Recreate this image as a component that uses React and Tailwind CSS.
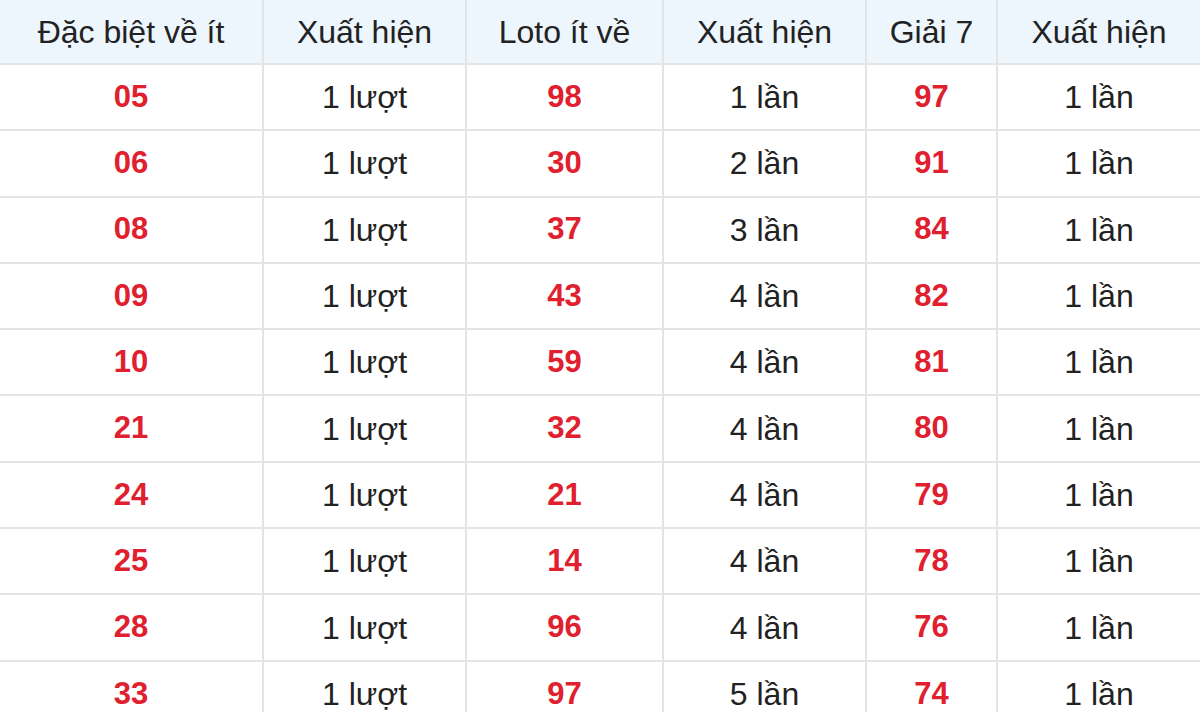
import React from "react";

const rows = [
  ["05", "1 lượt", "98", "1 lần", "97", "1 lần"],
  ["06", "1 lượt", "30", "2 lần", "91", "1 lần"],
  ["08", "1 lượt", "37", "3 lần", "84", "1 lần"],
  ["09", "1 lượt", "43", "4 lần", "82", "1 lần"],
  ["10", "1 lượt", "59", "4 lần", "81", "1 lần"],
  ["21", "1 lượt", "32", "4 lần", "80", "1 lần"],
  ["24", "1 lượt", "21", "4 lần", "79", "1 lần"],
  ["25", "1 lượt", "14", "4 lần", "78", "1 lần"],
  ["28", "1 lượt", "96", "4 lần", "76", "1 lần"],
  ["33", "1 lượt", "97", "5 lần", "74", "1 lần"],
];

const headers = ["Đặc biệt về ít", "Xuất hiện", "Loto ít về", "Xuất hiện", "Giải 7", "Xuất hiện"];
const widths = ["w-[263px]", "w-[203px]", "w-[197px]", "w-[203px]", "w-[131px]", "w-[203px]"];

export default function App() {
  return (
    <div className="w-[1200px] h-[712px] overflow-hidden bg-white font-['Liberation_Sans',Arial,sans-serif]">
      <table className="w-full table-fixed border-collapse text-[32px] text-[#222]">
        <colgroup>
          {widths.map((w, i) => (
            <col key={i} className={w} />
          ))}
        </colgroup>
        <thead>
          <tr className="h-[64px] bg-[#edf5fd]">
            {headers.map((h, i) => (
              <th key={i} className="border-2 border-t-0 border-[#e4e4e4] first:border-l-0 last:border-r-0 font-normal text-center">
                {h}
              </th>
            ))}
          </tr>
        </thead>
        <tbody>
          {rows.map((r, ri) => (
            <tr key={ri} className="h-[66.3px]">
              {r.map((c, ci) => (
                <td
                  key={ci}
                  className={
                    "border-2 border-[#e4e4e4] first:border-l-0 last:border-r-0 text-center " +
                    (ci % 2 === 0 ? "text-[#e0202e] font-bold text-[31px]" : "")
                  }
                >
                  {c}
                </td>
              ))}
            </tr>
          ))}
        </tbody>
      </table>
    </div>
  );
}
